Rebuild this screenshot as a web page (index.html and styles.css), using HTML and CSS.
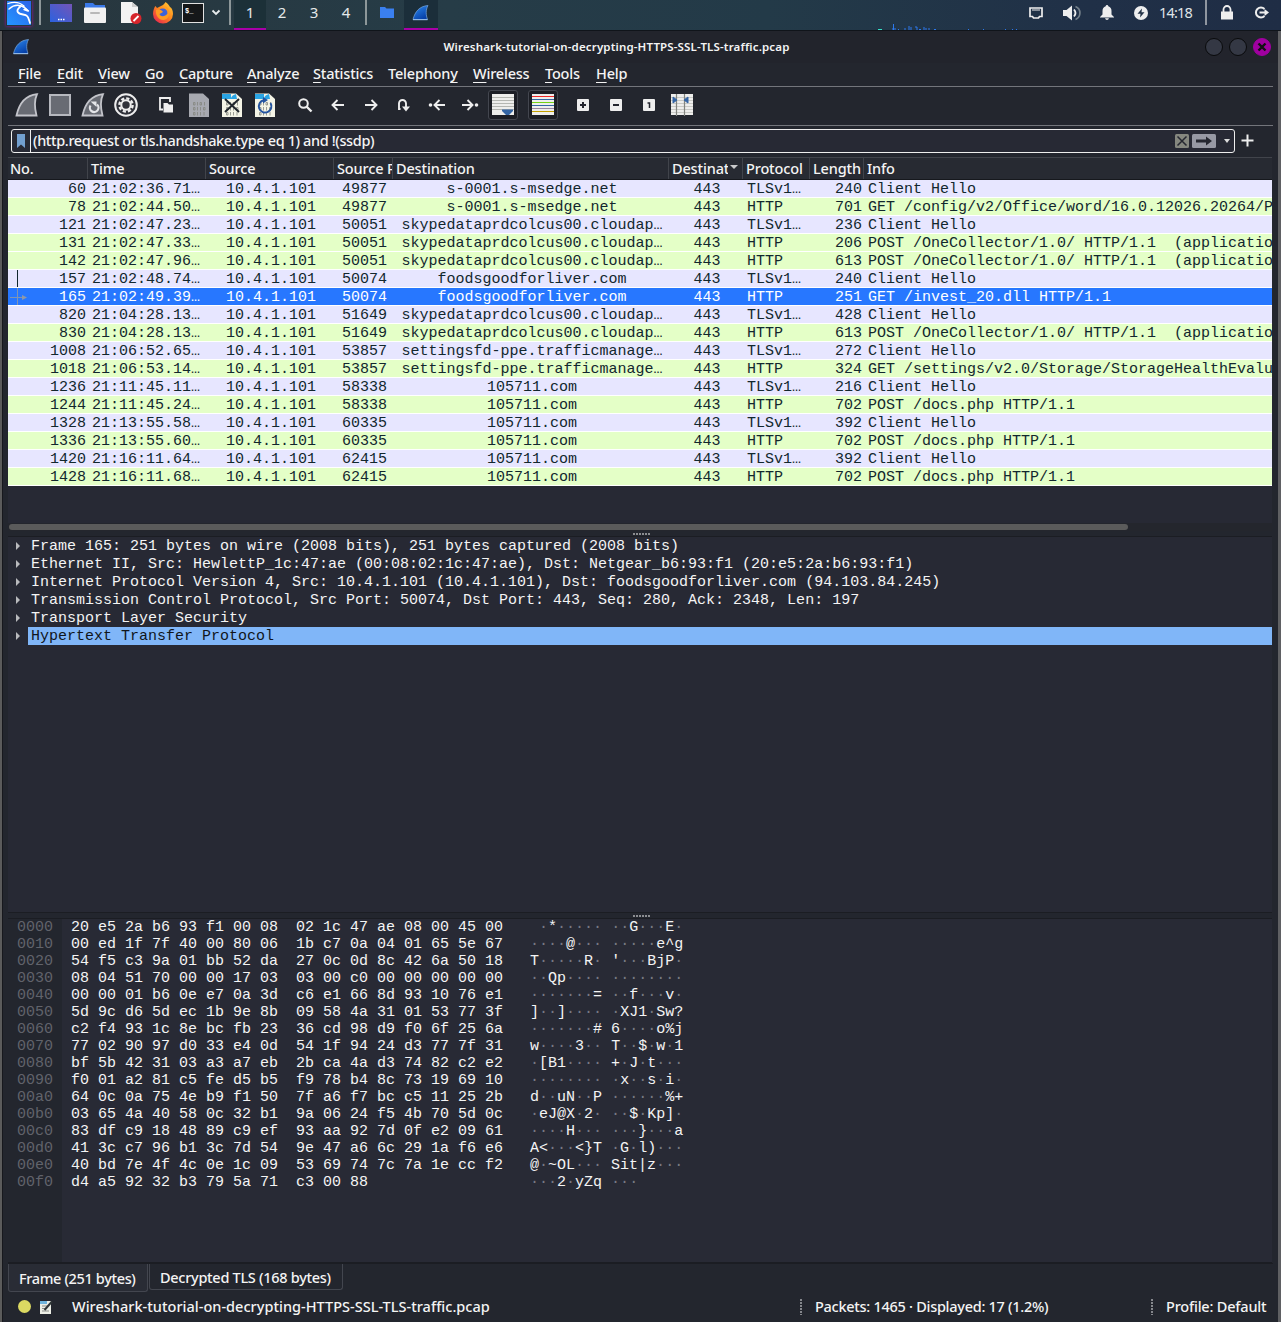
FILE: index.html
```html
<!DOCTYPE html>
<html lang="en">
<head>
<meta charset="utf-8">
<title>Wireshark</title>
<link rel="stylesheet" href="styles.css">
</head>
<body>
<svg class="defs" width="0" height="0">
  <defs>
    <linearGradient id="blueFin" x1="0" y1="0" x2="0.6" y2="1"><stop offset="0" stop-color="#2f8cf0"/><stop offset="1" stop-color="#0640a8"/></linearGradient>
    <linearGradient id="desk" x1="0" y1="1" x2="1" y2="0"><stop offset="0" stop-color="#2b62df"/><stop offset="1" stop-color="#7355b8"/></linearGradient>
    <linearGradient id="fire" x1="1" y1="0" x2="0.2" y2="1"><stop offset="0" stop-color="#ffd43a"/><stop offset="0.5" stop-color="#ff8a1d"/><stop offset="1" stop-color="#e8264f"/></linearGradient>
    <linearGradient id="kali" x1="0" y1="1" x2="1" y2="0"><stop offset="0" stop-color="#2496ff"/><stop offset="1" stop-color="#2c63ea"/></linearGradient>
  </defs>
  <symbol id="fin" viewBox="0 0 16 16"><path d="M0.5 14.5C2.5 6.5 7 1.2 15.5 0.5C13 5 13.4 10 15 14.5Z" fill="url(#blueFin)" stroke="#7aa7dc" stroke-width=".7"/><path d="M0.5 14.7H15" stroke="#9fc4ee" stroke-width="1"/></symbol>
  <symbol id="greyfin" viewBox="0 0 24 24"><path d="M1.5 22.5C4 11 10 2.5 22 1.2C19 8 19.5 15 21.5 22.5Z" fill="#686b73" stroke="#c3c4ca" stroke-width="1.8"/></symbol>
  <symbol id="doc" viewBox="0 0 20 24"><path d="M0 .5H14L20 6V24H0Z"/><g fill="none" stroke="#84867f" stroke-width=".8"><path d="M4.500 9.500v2.500h1.500v-2.500zM8.500 9v3.500M11 9.500v2.500h1.500v-2.500zM15.500 9v3.500M4.500 14.500v2.500h1.500v-2.500zM8.500 14v3.500M11.500 14v3.500M14.500 14.500v2.500h1.500v-2.500zM4.500 19.500v2.500h1.500v-2.500zM8.500 19v3.500M11.500 19v3.500M15 19v3.500"/></g></symbol>
</svg>

<header class="panel">
  <svg class="p-kali" width="26" height="26" viewBox="0 0 26 26"><rect x="1" y="1" width="24" height="24" fill="url(#kali)"/><g fill="none" stroke="#fff" stroke-linecap="round"><path d="M2 3.500C8 1.500 14 2.500 18 6" stroke-width="1.300"/><path d="M3 9C8 4.500 14 5 18 7L22 11L18 9.500" stroke-width="1.500"/><path d="M14 7C9 11 12 14 17 14.500S22 17 24 23" stroke-width="1.800"/><path d="M13 6C18 6 20 8 22.500 11" stroke-width="1.200"/></g></svg>
  <i class="p-sep s1"></i>
  <svg class="p-desk" width="22" height="18" viewBox="0 0 22 18"><rect width="22" height="18" fill="url(#desk)"/><path d="M8 15.500h1.500M10.500 15.500h1.500M13 15.500h1.500" stroke="#fff" stroke-width="1.500"/></svg>
  <svg class="p-files" width="22" height="20" viewBox="0 0 22 20"><path d="M1 0H9L11 2H21V8H1Z" fill="#3a79e8"/><rect y="4.500" width="22" height="15.500" rx="1" fill="#f1f1f1"/><path d="M7 10H15" stroke="#b9b9b9" stroke-width="2" stroke-linecap="round"/></svg>
  <svg class="p-edit" width="22" height="24" viewBox="0 0 22 24"><path d="M1 1H12L18 6V22H1Z" fill="#f3f3f3"/><path d="M12 1L18 6H12Z" fill="#cfcfcf"/><circle cx="16" cy="17.500" r="5.500" fill="#d6252b"/><path d="M13.500 20L18.500 15" stroke="#fff" stroke-width="1.800"/></svg>
  <svg class="p-fox" width="22" height="22" viewBox="0 0 22 22"><path d="M11 3C13 1 13.500 0 13.500 0C16 2 17 3 18 5C20 6 21 9 21 12A10 9.500 0 0 1 1 12C1 8 2.500 5 3.500 4L5 6L7 5Z" fill="url(#fire)"/><circle cx="10.800" cy="11.500" r="5" fill="#3d62d8"/><path d="M4 8C7 7 10 8 11 10L7.500 12C8.500 15 13 15 15.500 11.500C16 8 14 6 13 4C18 7 19 13 14.500 17C9 20 3 15 4 8Z" fill="#ff9a22"/></svg>
  <svg class="p-term" width="22" height="20" viewBox="0 0 22 20"><rect x=".5" y=".5" width="21" height="19" fill="#151719" stroke="#e2e2e2"/><text x="3" y="10" class="prompt">$_</text></svg>
  <svg class="p-chev" width="10" height="7" viewBox="0 0 10 7"><path d="M1.500 1.500L5 5L8.500 1.500" fill="none" stroke="#e8ecee" stroke-width="1.800"/></svg>
  <i class="p-sep s2"></i>
  <nav class="spaces"><b class="on">1</b><b>2</b><b>3</b><b>4</b></nav>
  <i class="p-sep s3"></i>
  <svg class="p-folder" width="14" height="11" viewBox="0 0 14 11"><path d="M0 0H5L6.500 1.500H14V11H0Z" fill="#3a80f0"/></svg>
  <span class="task"><svg width="17" height="16"><use href="#fin"/></svg></span>
  <svg class="p-graph" width="150" height="7" viewBox="0 0 150 7"><path d="M0 6.500h4" stroke="#35e0c8"/><path d="M14 6h4M20 6.500h1M27 5v2M31 3v4M33 4v3M37 4h2v3M41 6.500h2M46 4v3M48 5v2M50 6h2M56 6.500h2M90 6.500h1M105 6.500h1M127 6.500h1M134 6.500h1M138 6.500h1M15.500 1v6" stroke="#2c79ee" fill="none"/></svg>
  <svg class="p-net" width="14" height="12" viewBox="0 0 14 12"><path d="M1 1H13V9.500H10.500L9.500 11H4.500L3.500 9.500H1Z" fill="none" stroke="#eee" stroke-width="1.700"/><path d="M4 2v2M6 2v2M8 2v2M10 2v2" stroke="#eee"/></svg>
  <svg class="p-vol" width="18" height="16" viewBox="0 0 18 16"><path d="M0 5H3.500L9 .5V15.500L3.500 11H0Z" fill="#eee"/><path d="M11 4.500Q14 8 11 11.500" stroke="#eee" stroke-width="1.800" fill="none"/><path d="M12.500 1.500A7 7 0 0 1 12.500 14.500" stroke="#74808a" stroke-width="1.700" fill="none"/></svg>
  <svg class="p-bell" width="14" height="15" viewBox="0 0 14 15"><path d="M7 0Q8.200 0 8.300 1.300Q11.500 2.300 11.500 6V9.500L14 12V12.500H0V12L2.500 9.500V6Q2.500 2.300 5.700 1.300Q5.800 0 7 0ZM5 13.200H9Q8.500 15 7 15T5 13.200Z" fill="#eee"/></svg>
  <svg class="p-pow" width="14" height="14" viewBox="0 0 14 14"><circle cx="7" cy="7" r="7" fill="#eee"/><path d="M8 2.500L3.500 7.700H6.500L6 11.500L10.500 6.300H7.500Z" fill="#233246"/></svg>
  <time>14:18</time>
  <i class="p-sep s4"></i>
  <svg class="p-lock" width="12" height="15" viewBox="0 0 12 15"><rect y="6.500" width="12" height="8" fill="#eee"/><path d="M2.500 7V4.500A3.500 3.500 0 0 1 9.500 4.500V7" fill="none" stroke="#eee" stroke-width="1.800"/></svg>
  <svg class="p-out" width="15" height="13" viewBox="0 0 15 13"><path d="M10.500 3A5 5 0 1 0 10.500 10" fill="none" stroke="#eee" stroke-width="2"/><path d="M5.500 6.500H11" stroke="#eee" stroke-width="2"/><path d="M10.500 3L15 6.500L10.500 10Z" fill="#eee"/></svg>
</header>

<main class="window">
  <div class="titlebar">
    <svg class="t-icon" width="17" height="16"><use href="#fin"/></svg>
    <h1>Wireshark-tutorial-on-decrypting-HTTPS-SSL-TLS-traffic.pcap</h1>
    <div class="wbtns"><i></i><i></i><i class="close"><svg width="10" height="10" viewBox="0 0 10 10"><path d="M1.500 1.500L8.500 8.500M8.500 1.500L1.500 8.500" stroke="#111" stroke-width="2.400"/></svg></i></div>
  </div>
  <nav class="menu"><span><u>F</u>ile</span><span><u>E</u>dit</span><span><u>V</u>iew</span><span><u>G</u>o</span><span><u>C</u>apture</span><span><u>A</u>nalyze</span><span><u>S</u>tatistics</span><span>Telephon<u>y</u></span><span><u>W</u>ireless</span><span><u>T</u>ools</span><span><u>H</u>elp</span></nav>
  <div class="toolbar">
    <span><svg width="24" height="24"><use href="#greyfin"/></svg></span>
    <span><svg width="22" height="22" viewBox="0 0 22 22"><rect x="1" y="1" width="20" height="20" fill="#686b73" stroke="#b6b8be" stroke-width="2"/></svg></span>
    <span><svg width="24" height="24" viewBox="0 0 24 24"><use href="#greyfin"/><path d="M9.500 12.500A4.300 4.300 0 1 0 16 11.500" fill="none" stroke="#e4e5e8" stroke-width="2.200"/><path d="M9.500 8.500H15.500V14Z" fill="#e4e5e8"/></svg></span>
    <span><svg width="24" height="24" viewBox="0 0 24 24"><circle cx="12" cy="12" r="10.800" fill="#30323a" stroke="#ededed" stroke-width="2"/><circle cx="12" cy="12" r="6.600" fill="none" stroke="#ededed" stroke-width="2.400" stroke-dasharray="3.200 1.984"/><circle cx="12" cy="12" r="4.700" fill="none" stroke="#ededed" stroke-width="2"/></svg></span>
    <span class="gap"><svg width="14" height="16" viewBox="0 0 14 16"><path d="M4 12.500H1V1H11V5" fill="none" stroke="#eee" stroke-width="1.800"/><path d="M4.500 6H8.500L10 7.500H14V15.500H4.500Z" fill="#eee"/></svg></span>
    <span><svg width="20" height="24" fill="#a7a9b0"><use href="#doc"/></svg></span>
    <span><svg width="20" height="24" viewBox="0 0 20 24" fill="#f4f4e6"><use href="#doc"/><path d="M0 1H9V6H0Z" fill="#2aa5e5"/><path d="M9 5Q10 2 14 1L15 6H7Z" fill="#2aa5e5"/><path d="M3 6L17 19M17 6L3 19" stroke="#20262c" stroke-width="2"/></svg></span>
    <span><svg width="20" height="24" viewBox="0 0 20 24" fill="#f4f4e6"><use href="#doc"/><path d="M0 1H9V6H0Z" fill="#2aa5e5"/><path d="M9 5Q10 2 14 1L15 6H7Z" fill="#2aa5e5"/><path d="M15.500 10A6.300 6.300 0 1 1 8.500 7.200" fill="none" stroke="#2454a0" stroke-width="2"/><path d="M8 4L13 7L8 10.500Z" fill="#2454a0"/></svg></span>
    <span class="gap"><svg width="16" height="16" viewBox="0 0 16 16"><circle cx="6.500" cy="6.500" r="4.300" fill="none" stroke="#eee" stroke-width="2"/><path d="M9.500 9.500L14.500 14.500" stroke="#eee" stroke-width="2.400"/></svg></span>
    <span><svg width="16" height="14" viewBox="0 0 16 14"><path d="M14 7H3M7.500 2L2.500 7L7.500 12" fill="none" stroke="#eee" stroke-width="1.900"/></svg></span>
    <span><svg width="16" height="14" viewBox="0 0 16 14"><path d="M2 7H13M8.500 2L13.500 7L8.500 12" fill="none" stroke="#eee" stroke-width="1.900"/></svg></span>
    <span><svg width="14" height="14" viewBox="0 0 14 14"><path d="M3.500 11H2V5.500A3.500 3.500 0 0 1 9 5.500V9" fill="none" stroke="#eee" stroke-width="1.900"/><path d="M5 8.500H13L9 13.500Z" fill="#eee"/></svg></span>
    <span><svg width="18" height="14" viewBox="0 0 18 14"><circle cx="2.500" cy="7" r="1.800" fill="#eee"/><path d="M17 7H7M11.500 2L6.500 7L11.500 12" fill="none" stroke="#eee" stroke-width="1.900"/></svg></span>
    <span><svg width="18" height="14" viewBox="0 0 18 14"><circle cx="15.500" cy="7" r="1.800" fill="#eee"/><path d="M1 7H11M6.500 2L11.500 7L6.500 12" fill="none" stroke="#eee" stroke-width="1.900"/></svg></span>
    <span><em><svg width="22" height="22" viewBox="0 0 22 22"><rect y="0" width="22" height="21" fill="#eeeeec"/><path d="M0 3.500H22M0 6.500H22M0 9.500H22M0 12.500H22M0 15.500H22" stroke="#b5b7b2"/><path d="M10 15.500H21V17L17 21H14L10 17Z" fill="#3465a4"/></svg></em></span>
    <span class="gap"><em><svg width="22" height="22" viewBox="0 0 22 22"><rect width="22" height="21" fill="#eeeeec"/><g><path d="M0 2.500H22" stroke="#ef2929"/><path d="M0 5.500H22M0 11.500H22" stroke="#3465a4"/><path d="M0 8.500H22" stroke="#73d216"/><path d="M0 14.500H22" stroke="#9a86a4"/><path d="M0 17.500H22" stroke="#c4a000"/></g></svg></em></span>
    <span class="gap"><svg width="12" height="12" viewBox="0 0 12 12"><rect width="12" height="12" rx="1" fill="#eee"/><path d="M3 6H9M6 3V9" stroke="#23252e" stroke-width="2"/></svg></span>
    <span><svg width="12" height="12" viewBox="0 0 12 12"><rect width="12" height="12" rx="1" fill="#eee"/><path d="M3 6H9" stroke="#23252e" stroke-width="2"/></svg></span>
    <span><svg width="12" height="12" viewBox="0 0 12 12"><rect width="12" height="12" rx="1" fill="#eee"/><path d="M4.500 4H6.500V9" fill="none" stroke="#23252e" stroke-width="1.500"/></svg></span>
    <span><svg width="22" height="22" viewBox="0 0 22 22"><rect width="22" height="21" fill="#eeeeec"/><path d="M0 3.500H22M0 6.500H22M0 9.500H22M0 12.500H22M0 15.500H22M0 18.500H22" stroke="#c9cac6"/><path d="M5.500 0V22M13.500 0V22" stroke="#82847f" stroke-width="1.200"/><path d="M2 3L6 6L2 9ZM17 3L13 6L17 9Z" fill="#3465a4" stroke="#3465a4"/></svg></span>
  </div>
  <div class="filter">
    <div class="fbox"><span class="mark"><svg width="8" height="14" viewBox="0 0 8 14"><path d="M0 0H8V14L4 10.500L0 14Z" fill="#729fcf"/></svg></span><span class="ftext">(http.request or tls.handshake.type eq 1) and !(ssdp)</span>
      <svg class="fx" width="14" height="14" viewBox="0 0 14 14"><rect width="14" height="14" rx="1.500" fill="#85877f"/><path d="M2.500 2.500L11.500 11.500M11.500 2.500L2.500 11.500" stroke="#252730" stroke-width="1.500"/></svg>
      <svg class="fgo" width="24" height="14" viewBox="0 0 24 14"><rect width="24" height="14" rx="1.500" fill="#9799a4"/><path d="M4 5.500H14V2.500L20 7L14 11.500V8.500H4Z" fill="#252730"/></svg>
      <svg width="6" height="4" viewBox="0 0 6 4"><path d="M0 0H6L3 4Z" fill="#ddd"/></svg></div>
    <svg class="plus" width="13" height="13" viewBox="0 0 13 13"><path d="M.5 6.500H12.500M6.500 .5V12.500" stroke="#eee" stroke-width="2"/></svg>
  </div>
  <section class="list">
    <div class="cols head"><span>No.</span><span>Time</span><span>Source</span><span>Source Port</span><span>Destination</span><span class="sorted"><b>Destination</b><svg width="8" height="4" viewBox="0 0 8 4"><path d="M0 0H8L4 4Z" fill="#c9c9cb"/></svg></span><span>Protocol</span><span>Length</span><span>Info</span></div>
    <div id="packets"></div>
    <div class="hscroll"><i></i></div>
  </section>
  <div class="grip"></div>
  <section class="tree">
    <p>Frame 165: 251 bytes on wire (2008 bits), 251 bytes captured (2008 bits)</p>
    <p>Ethernet II, Src: HewlettP_1c:47:ae (00:08:02:1c:47:ae), Dst: Netgear_b6:93:f1 (20:e5:2a:b6:93:f1)</p>
    <p>Internet Protocol Version 4, Src: 10.4.1.101 (10.4.1.101), Dst: foodsgoodforliver.com (94.103.84.245)</p>
    <p>Transmission Control Protocol, Src Port: 50074, Dst Port: 443, Seq: 280, Ack: 2348, Len: 197</p>
    <p>Transport Layer Security</p>
    <p class="sel">Hypertext Transfer Protocol</p>
  </section>
  <div class="grip"></div>
  <section class="hex"><pre id="offsets"></pre><pre id="bytes"></pre><pre id="ascii"></pre></section>
  <div class="tabs"><span class="active">Frame (251 bytes)</span><span>Decrypted TLS (168 bytes)</span></div>
  <footer>
    <i class="led"></i>
    <svg class="note" width="13" height="14" viewBox="0 0 13 14"><path d="M0 1H11V14H0Z" fill="#eceee6"/><path d="M0 1H7V4H0Z" fill="#6fb4dd"/><path d="M2 6H8M2 8.500H7M2 11H9" stroke="#8b8d88"/><path d="M4.500 10L12 1.500" stroke="#2e3436" stroke-width="2"/></svg>
    <span class="file">Wireshark-tutorial-on-decrypting-HTTPS-SSL-TLS-traffic.pcap</span>
    <span class="stat">Packets: 1465 · Displayed: 17 (1.2%)</span>
    <span class="profile">Profile: Default</span>
  </footer>
</main>
<script src="script.js"></script>
</body>
</html>
```
FILE: styles.css
```css
* { box-sizing: border-box; }
body {
  margin: 0; width: 1281px; height: 1322px; overflow: hidden;
  background: linear-gradient(90deg, #5b5b5b 0 2px, #17181d 2px 3px, #20232b 3px 1278px, #5f6063 1278px);
  color: #f4f4f4; font: 500 14.5px/20px "Noto Sans", sans-serif;
}
svg { display: block; flex: none; }
.defs { position: absolute; }

.panel {
  height: 31px; display: flex; align-items: center; padding-bottom: 5px;
  background: linear-gradient(90deg, #28363d, #263c47 35%, #233a48 60%, #203047 85%, #1f2d45);
  border-bottom: 1px solid #10141a;
}
.p-kali { margin-left: 6px; box-shadow: 0 0 3px #a010a0; }
.p-sep { width: 2px; height: 25px; background: #8d9799; }
.s1 { margin-left: 7px; }
.p-desk { margin-left: 9px; }
.p-files { margin-left: 12px; }
.p-edit { margin-left: 14px; }
.p-fox { margin-left: 10px; }
.p-term { margin-left: 8px; }
.prompt { font: bold 7px "Liberation Mono", monospace; fill: #fff; }
.p-chev { margin-left: 7px; }
.s2 { margin-left: 8px; }
.spaces { display: flex; margin-left: 3px; height: 30px; align-self: flex-start; }
.spaces b { width: 32px; text-align: center; font-weight: 400; line-height: 25px; font-size: 15px; color: #e5e9ea; }
.spaces .on { background: #1c3038; border-bottom: 2px solid #a800a8; }
.s3 { margin-left: 3px; }
.p-folder { margin-left: 13px; }
.task { align-self: flex-start; height: 30px; width: 34px; margin-left: 10px; padding: 5px 8px; background: #1b2e3a; border-bottom: 2px solid #a800a8; }
.p-graph { margin-left: 440px; align-self: flex-end; margin-bottom: -5px; }
.p-net { margin-left: 1px; }
.p-vol { margin-left: 20px; }
.p-bell { margin-left: 19px; }
.p-pow { margin-left: 20px; }
time { margin-left: 11px; width: 46px; font-weight: 400; font-size: 14.500px; letter-spacing: -.8px; color: #dfe4e8; line-height: 18px; padding-bottom: 2px; }
.s4 { background: #8f96a0; }
.p-lock { margin-left: 14px; }
.p-out { margin-left: 21px; }

.window {
  margin: 0 3px; width: 1275px; height: 1291px; padding: 0 5px; display: flex; flex-direction: column;
  background: #23262e; border-radius: 6px 6px 0 0;
}
.titlebar { height: 32px; display: flex; align-items: center; background: #22242c; margin: 0 -5px; border-radius: 6px 6px 0 0; }
.t-icon { margin-left: 10px; width: 16px; }
h1 { margin: 0; flex: 1; text-align: center; font-size: 11.500px; font-weight: 600; padding-left: 105px; letter-spacing: .155px; white-space: nowrap; }
.wbtns { display: flex; gap: 6px; width: 179px; justify-content: flex-end; padding-right: 7px; }
.wbtns i { width: 18px; height: 18px; border-radius: 50%; background: #343844; border: 1px solid #090a0c; }
.wbtns .close { background: #a000a0; border-color: #a000a0; display: grid; place-items: center; }

.menu {
  height: 24px; display: grid; grid-template-columns: 39px 41px 47px 34px 68px 66px 75px 85px 72px 51px 60px;
  padding-left: 10px; line-height: 20px; border-bottom: 1px solid #73757b; letter-spacing: -.2px;
}
.menu u { text-underline-offset: 3px; text-decoration-thickness: 1px; }
.toolbar {
  height: 39px; display: flex; align-items: center; border-bottom: 1px solid #73757b; padding: 0 0 2px 2.5px;
}
.toolbar span { display: grid; place-items: center; width: 33px; flex: none; }
.toolbar .gap { margin-left: 7px; }
.toolbar em { border: 1px solid #43464f; border-radius: 3px; width: 30px; height: 30px; display: grid; place-items: center; background: #1c1e25; }

.filter { height: 31px; display: flex; align-items: center; padding-left: 3px; }
.fbox { width: 1224px; height: 24px; border: 1px solid #eee; border-radius: 3px; background: #272934; display: flex; align-items: center; margin-bottom: 1px; }
.mark { width: 19px; height: 22px; border-right: 1px solid #eee; display: grid; place-items: center; }
.ftext { flex: 1; padding: 0 0 2px 2px; letter-spacing: -.38px; }
.fgo { margin: 0 8px 0 3px; }
.fx, .fgo { margin-bottom: 1px; }
.fbox > svg:last-child { margin-right: 4px; }
.plus { margin: 0 0 2px 6px; }

.list { width: 1264px; height: 374px; background: #272934; overflow: hidden; display: flex; flex-direction: column; }
.cols { display: grid; grid-template-columns: 80px 118px 128px 59px 276px 74px 67px 54px 408px; }
.head { height: 23px; background: #272a32; border-top: 1px solid #41444b; border-bottom: 1px solid #16181d; letter-spacing: -.15px; }
.head span { overflow: hidden; white-space: nowrap; padding-left: 3px; border-right: 1px solid #41444b; line-height: 20px; height: 21px; }
.head span:first-child { padding-left: 2px; }
.head span:last-child { border: 0; }
.head .sorted { display: flex; align-items: center; justify-content: space-between; padding-right: 4px; }
.sorted b { font-weight: inherit; width: 56px; overflow: hidden; padding-bottom: 1px; }
.sorted svg { margin-bottom: 4px; }
.row, .tree, pre { font: 15px/18px "Liberation Mono", monospace; }
.row { height: 18px; color: #12272e; border-bottom: 1px solid #fff; line-height: 19px; }
.row span { overflow: hidden; white-space: pre; text-align: center; padding-left: 2px; height: 19px; }
.row span:nth-child(1), .row span:nth-child(8) { text-align: right; padding-right: 2px; }
.row span:nth-child(2) { text-align: left; padding-left: 4px; }
.row span:nth-child(7), .row span:nth-child(9) { text-align: left; padding-left: 4px; }
.tls { background: #e7e6ff; }
.http { background: #e4ffc7; }
.chosen { background: #2777ff; color: #fff; }
.row .rel { display: flex; justify-content: space-between; padding-left: 2px; }
.hscroll { margin-top: auto; height: 8px; background: #24262d; padding: 1px; }
.hscroll i { display: block; width: 1119px; height: 6px; border-radius: 3px; background: #5b5b5b; }
.grip { height: 5px; display: grid; place-items: center; }
.grip::before { content: ""; width: 17px; height: 2px; margin-left: 2px; background: repeating-linear-gradient(90deg, #8b8d91 0 2px, transparent 2px 3px); }
.tree { height: 377px; background: #272934; border: 1px solid #1b1d23; border-width: 1px 0; width: 1264px; }
.tree p { margin: 0 0 0 20px; height: 18px; line-height: 20px; padding-left: 3px; white-space: pre; position: relative; }
.tree p::before { content: ""; position: absolute; left: -12px; top: 5px; border: 4px solid transparent; border-left-color: #b9babd; border-right: 0; }
.tree .sel { background: #80b6f8; color: #10151b; }
.hex { height: 345px; width: 1264px; background: linear-gradient(90deg, #23262e 54px, #282a35 54px); display: flex; border-top: 1px solid #1b1d23; border-bottom: 1px solid #1b1d23; }
.hex pre { margin: 0; line-height: 17px; }
#offsets { width: 63px; padding-left: 9px; color: #61636b; }
#bytes { width: 459px; }
#ascii i { color: #777983; font-style: normal; }
.tabs { display: flex; align-items: flex-start; height: 30px; gap: 1px; letter-spacing: -.29px; border-top: 1px solid #1b1d23; }
.tabs span { border: 1px solid #43464f; border-top: 0; border-radius: 0 0 3px 3px; height: 26px; width: 194px; padding-left: 10px; line-height: 26px; }
.tabs .active { height: 28px; width: 140px; line-height: 28px; background: #292c35; letter-spacing: -.36px; }
footer { display: flex; align-items: center; height: 28px; line-height: 18px; letter-spacing: -.28px; white-space: nowrap; }
footer span { padding-bottom: 2px; }
.led { width: 13px; height: 13px; border-radius: 50%; background: #dcd962; margin: 0 0 2px 10px; }
.note { margin: 0 0 1px 9px; }
.file { margin-left: 19px; width: 728px; letter-spacing: .02px; }
.stat, .profile { padding-left: 15px; background: repeating-linear-gradient(#85878c 0 2px, transparent 2px 3px) 0 center/2px 16px no-repeat; }
.stat { width: 351px; }
.profile { letter-spacing: -.2px; }
```
FILE: script.js
```js
const packets = [
  [60, '21:02:36.71…', 49877, 's-0001.s-msedge.net', 240, ''],
  [78, '21:02:44.50…', 49877, 's-0001.s-msedge.net', 701, 'GET /config/v2/Office/word/16.0.12026.20264/Production'],
  [121, '21:02:47.23…', 50051, 'skypedataprdcolcus00.cloudap…', 236, ''],
  [131, '21:02:47.33…', 50051, 'skypedataprdcolcus00.cloudap…', 206, 'POST /OneCollector/1.0/ HTTP/1.1  (application/bond)'],
  [142, '21:02:47.96…', 50051, 'skypedataprdcolcus00.cloudap…', 613, 'POST /OneCollector/1.0/ HTTP/1.1  (application/bond)'],
  [157, '21:02:48.74…', 50074, 'foodsgoodforliver.com', 240, ''],
  [165, '21:02:49.39…', 50074, 'foodsgoodforliver.com', 251, 'GET /invest_20.dll HTTP/1.1'],
  [820, '21:04:28.13…', 51649, 'skypedataprdcolcus00.cloudap…', 428, ''],
  [830, '21:04:28.13…', 51649, 'skypedataprdcolcus00.cloudap…', 613, 'POST /OneCollector/1.0/ HTTP/1.1  (application/bond)'],
  [1008, '21:06:52.65…', 53857, 'settingsfd-ppe.trafficmanage…', 272, ''],
  [1018, '21:06:53.14…', 53857, 'settingsfd-ppe.trafficmanage…', 324, 'GET /settings/v2.0/Storage/StorageHealthEvaluation'],
  [1236, '21:11:45.11…', 58338, '105711.com', 216, ''],
  [1244, '21:11:45.24…', 58338, '105711.com', 702, 'POST /docs.php HTTP/1.1'],
  [1328, '21:13:55.58…', 60335, '105711.com', 392, ''],
  [1336, '21:13:55.60…', 60335, '105711.com', 702, 'POST /docs.php HTTP/1.1'],
  [1420, '21:16:11.64…', 62415, '105711.com', 392, ''],
  [1428, '21:16:11.68…', 62415, '105711.com', 702, 'POST /docs.php HTTP/1.1'],
];
const marks = {
  157: '<svg width="20" height="18"><path d="M7.5 0V17" stroke="#12272e"/></svg>',
  165: '<svg width="20" height="18"><path d="M7.5 0V17M0 9.500H14" stroke="#8095b4" fill="none"/><path d="M12 7L17 9.500L12 12Z" fill="#8f98a8"/></svg>',
};
document.getElementById('packets').innerHTML = packets.map(([no, time, port, dest, len, info]) => {
  const kind = no === 165 ? 'chosen' : info ? 'http' : 'tls';
  const number = marks[no] ? `<span class="rel">${marks[no]}${no}</span>` : `<span>${no}</span>`;
  return `<div class="cols row ${kind}">${number}<span>${time}</span><span>10.4.1.101</span><span>${port}</span>` +
    `<span>${dest}</span><span>443</span><span>${info ? 'HTTP' : 'TLSv1…'}</span><span>${len}</span><span>${info || 'Client Hello'}</span></div>`;
}).join('');

const dump = `20 e5 2a b6 93 f1 00 08 02 1c 47 ae 08 00 45 00
00 ed 1f 7f 40 00 80 06 1b c7 0a 04 01 65 5e 67
54 f5 c3 9a 01 bb 52 da 27 0c 0d 8c 42 6a 50 18
08 04 51 70 00 00 17 03 03 00 c0 00 00 00 00 00
00 00 01 b6 0e e7 0a 3d c6 e1 66 8d 93 10 76 e1
5d 9c d6 5d ec 1b 9e 8b 09 58 4a 31 01 53 77 3f
c2 f4 93 1c 8e bc fb 23 36 cd 98 d9 f0 6f 25 6a
77 02 90 97 d0 33 e4 0d 54 1f 94 24 d3 77 7f 31
bf 5b 42 31 03 a3 a7 eb 2b ca 4a d3 74 82 c2 e2
f0 01 a2 81 c5 fe d5 b5 f9 78 b4 8c 73 19 69 10
64 0c 0a 75 4e b9 f1 50 7f a6 f7 bc c5 11 25 2b
03 65 4a 40 58 0c 32 b1 9a 06 24 f5 4b 70 5d 0c
83 df c9 18 48 89 c9 ef 93 aa 92 7d 0f e2 09 61
41 3c c7 96 b1 3c 7d 54 9e 47 a6 6c 29 1a f6 e6
40 bd 7e 4f 4c 0e 1c 09 53 69 74 7c 7a 1e cc f2
d4 a5 92 32 b3 79 5a 71 c3 00 88`.split('\n').map(line => line.split(' '));

const glyph = byte => {
  const code = parseInt(byte, 16);
  if (code < 32 || code > 126) return '<i>·</i>';
  return String.fromCharCode(code).replace('<', '&lt;');
};
const halves = (row, map, joint, gap) =>
  row.slice(0, 8).map(map).join(joint) + gap + row.slice(8).map(map).join(joint);
document.getElementById('offsets').textContent = dump.map((_, i) => (i * 16).toString(16).padStart(4, '0')).join('\n');
document.getElementById('bytes').textContent = dump.map(row => halves(row, b => b, ' ', '  ')).join('\n');
document.getElementById('ascii').innerHTML = dump.map(row => halves(row, glyph, '', ' ')).join('\n');
```
